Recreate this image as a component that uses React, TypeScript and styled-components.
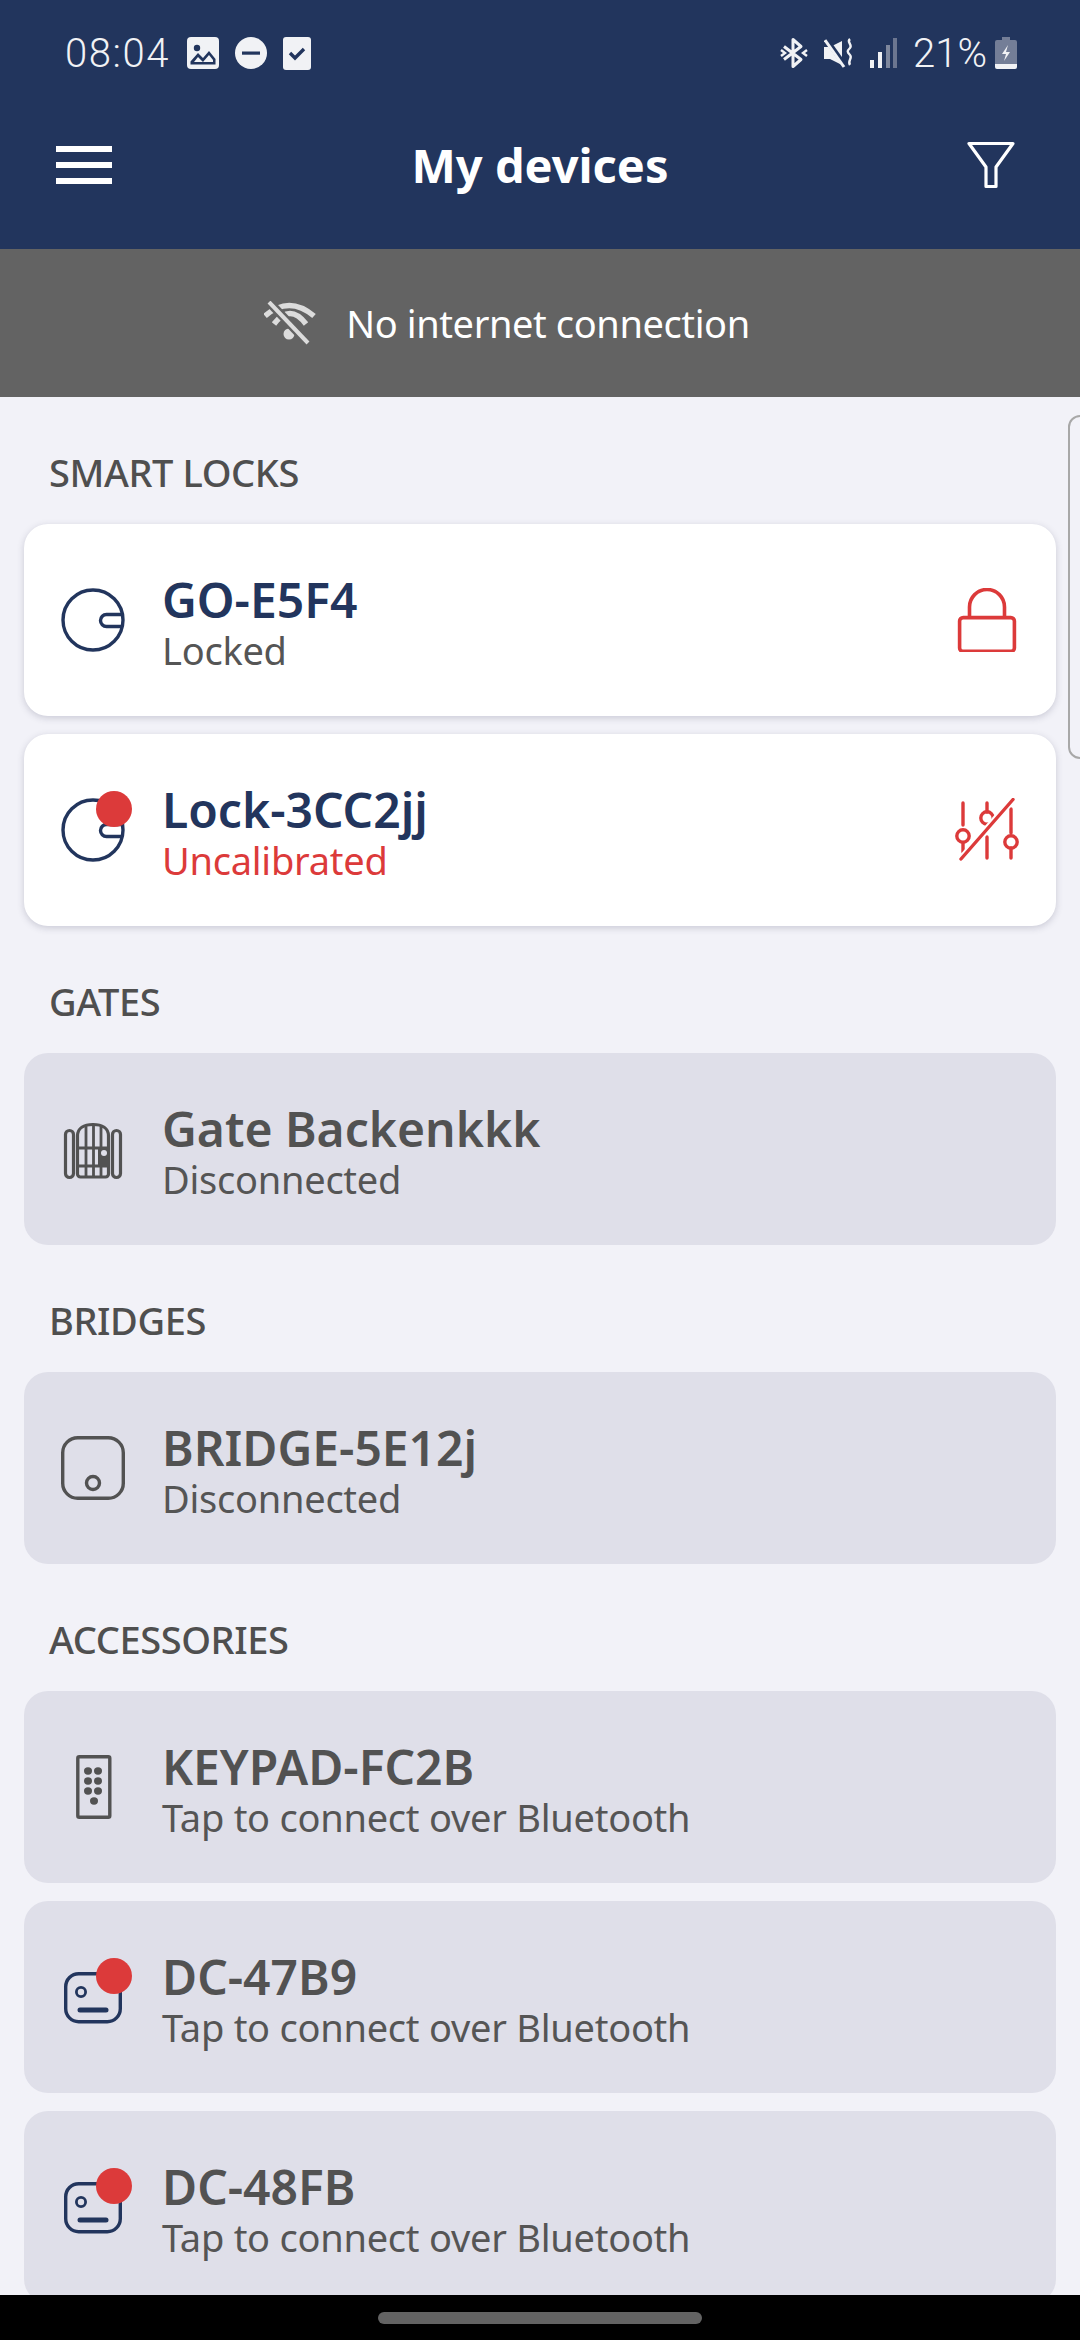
import styled, { createGlobalStyle } from "styled-components";

const GlobalStyle = createGlobalStyle`
  html, body {
    margin: 0;
    padding: 0;
    background: #f2f2f8;
  }
  body {
    font-family: "Noto Sans", "Open Sans", sans-serif;
  }
`;

const NAVY = "#22355d";
const RED = "#dc3a3a";
const GREY = "#525252";

const LockIcon = () => (
  <svg width="64" height="64" viewBox="0 0 64 64" fill="none" stroke={NAVY} strokeWidth="3.4">
    <circle cx="32" cy="32" r="30" />
    <path d="M62 26.5H45.5a6 6 0 0 0 0 12H62" />
  </svg>
);

const PadlockIcon = () => (
  <svg width="64" height="64" viewBox="0 0 64 64" fill="none" stroke={RED} strokeWidth="3.6">
    <rect x="4.6" y="29.6" width="54.8" height="33.8" rx="3.5" />
    <path d="M14.5 29V19a17.5 17.5 0 0 1 35 0v10" />
  </svg>
);

const SlidersIcon = () => (
  <svg width="64" height="64" viewBox="0 0 64 64" fill="none" stroke={RED} strokeWidth="3.4" strokeLinecap="round">
    <path d="M8 5v22M8 45v9M32 5v9M32 39v21M56 11v24M56 50v10" />
    <circle cx="8" cy="38" r="6.2" />
    <circle cx="32" cy="20" r="6.2" />
    <circle cx="56" cy="44" r="6.2" />
    <path d="M58 1L6 61" stroke="#fff" strokeWidth="7" strokeLinecap="butt" />
    <path d="M58 1.500L6 61" />
  </svg>
);

const GateIcon = () => (
  <svg width="64" height="64" viewBox="0 0 64 64" fill="none" stroke={GREY} strokeWidth="3.2">
    <rect x="4.500" y="13.500" width="8" height="47" rx="4" />
    <rect x="51.500" y="13.500" width="8" height="47" rx="4" />
    <path d="M16.500 57V19C16.500 11 23 7.500 32 7.500S47.500 11 47.500 19V57a3 3 0 0 1-3 3H19.500a3 3 0 0 1-3-3Z" />
    <path d="M25 8v52M32.500 7v52M40 8v52M16 31h32M16 49h32" strokeWidth="2.8" />
    <rect x="37" y="31" width="11" height="18" fill={GREY} stroke="none" />
    <circle cx="43" cy="36" r="3" fill="#dfdfe9" stroke="none" />
  </svg>
);

const BridgeIcon = () => (
  <svg width="64" height="64" viewBox="0 0 64 64" fill="none" stroke={GREY} strokeWidth="3.4">
    <rect x="1.700" y="1.700" width="60.600" height="60.600" rx="15" />
    <circle cx="32" cy="47" r="6.500" />
  </svg>
);

const KeypadIcon = () => (
  <svg width="64" height="64" viewBox="0 0 64 64" fill="none">
    <rect x="16.800" y="1.800" width="32" height="60.500" rx="1.500" stroke={GREY} strokeWidth="3.400" />
    <g fill={GREY}>
      <ellipse cx="27" cy="16" rx="4" ry="3.700" />
      <ellipse cx="37" cy="16" rx="4" ry="3.700" />
      <ellipse cx="27" cy="26" rx="4" ry="3.700" />
      <ellipse cx="37" cy="26" rx="4" ry="3.700" />
      <ellipse cx="27" cy="36" rx="4" ry="3.700" />
      <ellipse cx="37" cy="36" rx="4" ry="3.700" />
      <ellipse cx="33" cy="46" rx="4" ry="3.700" />
    </g>
  </svg>
);

const ControllerIcon = () => (
  <svg width="64" height="64" viewBox="0 0 64 64" fill="none" stroke={NAVY} strokeWidth="3.400">
    <rect x="4.700" y="8.700" width="54.600" height="48" rx="13" />
    <circle cx="20" cy="27" r="4.600" strokeWidth="2.800" />
    <path d="M19 45h26" strokeWidth="5" strokeLinecap="round" />
  </svg>
);

const MenuIcon = () => (
  <svg width="56" height="38" viewBox="0 0 56 38" fill="#fff">
    <rect width="56" height="6" />
    <rect y="16" width="56" height="6" />
    <rect y="32" width="56" height="6" />
  </svg>
);

const FilterIcon = () => (
  <svg width="48" height="48" viewBox="0 0 48 48" fill="none" stroke="#fff" strokeWidth="3.200" strokeLinejoin="round">
    <path d="M2 2.500h44L29 26v19.500h-10V26Z" />
  </svg>
);

const WifiOffIcon = () => (
  <svg width="52" height="44" viewBox="0 0 52 44" fill="none" stroke="#dcdcdc" strokeWidth="5.500">
    <path d="M1 15Q25-6 50 15" />
    <path d="M10 23Q26 2 42 23" />
    <circle cx="25" cy="33" r="5.500" fill="#dcdcdc" stroke="none" />
    <path d="M4 0l42 44" stroke="#636363" strokeWidth="9" />
    <path d="M5 1l39 41" strokeWidth="4" />
  </svg>
);

const ImageStatusIcon = () => (
  <svg width="32" height="32" viewBox="0 0 32 32">
    <rect width="32" height="32" rx="4" fill="#f1f2f5" />
    <circle cx="10" cy="11" r="3.200" fill={NAVY} />
    <path d="M3.500 27.500v-3L11 16l5 5 6-7 6.500 8v5.500Z" fill={NAVY} />
    <path d="M7 25l4-5 5 5 6-7 4 5v2H7Z" fill="#f1f2f5" />
  </svg>
);

const DndStatusIcon = () => (
  <svg width="32" height="32" viewBox="0 0 32 32">
    <circle cx="16" cy="16" r="16" fill="#f1f2f5" />
    <rect x="7" y="14.500" width="18" height="3.200" fill={NAVY} />
  </svg>
);

const CheckStatusIcon = () => (
  <svg width="28" height="33" viewBox="0 0 28 33" fill="none">
    <rect width="28" height="33" rx="3" fill="#f1f2f5" />
    <path d="M7 16l5 5 9-9" stroke={NAVY} strokeWidth="3.400" />
  </svg>
);

const BluetoothStatusIcon = () => (
  <svg width="28" height="32" viewBox="0 0 28 32" fill="none" stroke="#f1f2f5" strokeWidth="3">
    <path d="M13 16V2.500l8 7-17 13M13 16v13.500l8-7-17-13" strokeLinejoin="round" />
    <path d="M1 13l4 3-4 3" strokeWidth="2.400" />
    <path d="M27 13l-4 3 4 3" strokeWidth="2.400" />
  </svg>
);

const MuteStatusIcon = () => (
  <svg width="30" height="32" viewBox="0 0 30 32" fill="none">
    <path d="M0 10h6L18 4v24L6 22H0Z" fill="#f1f2f5" />
    <path d="M2 2l20 28" stroke={NAVY} strokeWidth="5" />
    <path d="M1 3l19 27" stroke="#f1f2f5" strokeWidth="3" />
    <path d="M26 2c-4 3 3 6 0 9s-3 4 0 7-3 6 0 10" stroke="#f1f2f5" strokeWidth="2.400" />
  </svg>
);

const SignalStatusIcon = () => (
  <svg width="27" height="30" viewBox="0 0 27 30">
    <rect x="0" y="22" width="4" height="8" fill="#f1f2f5" />
    <rect x="8" y="14" width="4" height="16" fill="#f1f2f5" />
    <rect x="16" y="7" width="4" height="23" fill="#7e879d" />
    <rect x="23" y="0" width="4" height="30" fill="#6c7690" />
  </svg>
);

const BatteryStatusIcon = () => (
  <svg width="22" height="32" viewBox="0 0 22 32">
    <path d="M7 0h8v3h5a2 2 0 0 1 2 2v22H0V5a2 2 0 0 1 2-2h5Z" fill="#747e97" />
    <path d="M0 27h22v3a2 2 0 0 1-2 2H2a2 2 0 0 1-2-2Z" fill="#f1f2f5" />
    <path d="M13 8l-6 9h4l-2 7 6-9h-4Z" fill="#f1f2f5" />
  </svg>
);

const Page = styled.div`
  position: relative;
  width: 1080px;
  height: 2340px;
  display: flex;
  flex-direction: column;
  overflow: hidden;
  background: #f2f2f8;
`;

const Header = styled.header`
  flex: none;
  height: 249px;
  background: ${NAVY};
  color: #fff;
`;

const StatusBar = styled.div`
  height: 106px;
  display: flex;
  align-items: center;
  justify-content: space-between;
  padding: 0 63px 0 65px;
  font-family: Roboto, sans-serif;
  font-size: 40px;
  color: #f1f2f5;
`;

const StatusGroup = styled.div<{ $gap: number }>`
  display: flex;
  align-items: center;
  gap: ${(p) => p.$gap}px;
`;

const StatusTime = styled.span`
  font-weight: 300;
  letter-spacing: 1.6px;
  margin-right: 1px;
`;

const StatusPercent = styled.span`
  font-weight: 300;
  margin: 0 -8px 0 0;
`;

const Toolbar = styled.div`
  height: 118px;
  display: grid;
  grid-template-columns: 1fr auto 1fr;
  align-items: center;
  padding: 0 56px;
`;

const Title = styled.h1`
  margin: 0;
  font-size: 47px;
  font-weight: 700;
`;

const ToolbarEnd = styled.div`
  display: flex;
  justify-content: flex-end;
  padding-right: 9px;
`;

const ToolbarStart = styled.div`
  display: flex;
`;

const Banner = styled.div`
  flex: none;
  height: 148px;
  box-sizing: border-box;
  padding-right: 66px;
  background: #636363;
  color: #fff;
  display: flex;
  align-items: center;
  justify-content: center;
  gap: 30px;
  font-size: 38px;
  letter-spacing: -0.4px;
`;

const List = styled.div`
  flex: 1;
  min-height: 0;
  overflow: hidden;
  padding: 0 24px;
`;

const SectionTitle = styled.h2`
  margin: 0;
  height: 127px;
  box-sizing: border-box;
  padding: 49px 0 0 25px;
  font-size: 38px;
  line-height: 52px;
  font-weight: 500;
  letter-spacing: -0.4px;
  color: #4f4f4f;
`;

const CardStack = styled.div`
  display: flex;
  flex-direction: column;
  gap: 18px;
`;

const Card = styled.div<{ $active?: boolean }>`
  height: 192px;
  flex: none;
  box-sizing: border-box;
  display: flex;
  align-items: center;
  padding: 0 37px;
  border-radius: 24px;
  background: ${(p) => (p.$active ? "#fff" : "#dfdfe9")};
  box-shadow: ${(p) => (p.$active ? "0 2px 7px rgba(60, 60, 90, 0.22)" : "none")};
`;

const IconSlot = styled.div`
  position: relative;
  flex: none;
  width: 64px;
  height: 64px;
  margin-right: 37px;
  svg {
    display: block;
    overflow: visible;
  }
`;

const Badge = styled.span`
  position: absolute;
  left: 35px;
  top: -7px;
  width: 36px;
  height: 36px;
  border-radius: 50%;
  background: ${RED};
`;

const CardText = styled.div`
  flex: 1;
  min-width: 0;
  padding-top: 6px;
`;

const Name = styled.div<{ $active?: boolean }>`
  font-size: 48px;
  line-height: 54px;
  font-weight: 600;
  color: ${(p) => (p.$active ? NAVY : GREY)};
`;

const Detail = styled.div<{ $alert?: boolean }>`
  font-size: 38px;
  line-height: 46px;
  letter-spacing: -0.25px;
  color: ${(p) => (p.$alert ? RED : "#555555")};
`;

const CardAction = styled.div`
  flex: none;
  width: 64px;
  height: 64px;
`;

const EdgeHandle = styled.div`
  position: absolute;
  right: -4px;
  top: 415px;
  width: 12px;
  height: 340px;
  border: 2px solid #a8a8a8;
  border-radius: 12px 0 0 12px;
`;

const NavBar = styled.div`
  flex: none;
  height: 45px;
  background: #000;
  display: flex;
  align-items: center;
  justify-content: center;
`;

const NavPill = styled.div`
  width: 324px;
  height: 12px;
  border-radius: 6px;
  background: #636363;
`;

type Device = {
  name: string;
  detail: string;
  icon: React.ReactNode;
  active?: boolean;
  badge?: boolean;
  alert?: boolean;
  action?: React.ReactNode;
};

const sections: { title: string; devices: Device[] }[] = [
  {
    title: "SMART LOCKS",
    devices: [
      { name: "GO-E5F4", detail: "Locked", icon: <LockIcon />, active: true, action: <PadlockIcon /> },
      {
        name: "Lock-3CC2jj",
        detail: "Uncalibrated",
        icon: <LockIcon />,
        active: true,
        badge: true,
        alert: true,
        action: <SlidersIcon />,
      },
    ],
  },
  { title: "GATES", devices: [{ name: "Gate Backenkkk", detail: "Disconnected", icon: <GateIcon /> }] },
  { title: "BRIDGES", devices: [{ name: "BRIDGE-5E12j", detail: "Disconnected", icon: <BridgeIcon /> }] },
  {
    title: "ACCESSORIES",
    devices: [
      { name: "KEYPAD-FC2B", detail: "Tap to connect over Bluetooth", icon: <KeypadIcon /> },
      { name: "DC-47B9", detail: "Tap to connect over Bluetooth", icon: <ControllerIcon />, badge: true },
      { name: "DC-48FB", detail: "Tap to connect over Bluetooth", icon: <ControllerIcon />, badge: true },
    ],
  },
];

const App = () => {
  return (
    <Page>
      <GlobalStyle />
      <Header>
        <StatusBar>
          <StatusGroup $gap={16}>
            <StatusTime>08:04</StatusTime>
            <ImageStatusIcon />
            <DndStatusIcon />
            <CheckStatusIcon />
          </StatusGroup>
          <StatusGroup $gap={16}>
            <BluetoothStatusIcon />
            <MuteStatusIcon />
            <SignalStatusIcon />
            <StatusPercent>21%</StatusPercent>
            <BatteryStatusIcon />
          </StatusGroup>
        </StatusBar>
        <Toolbar>
          <ToolbarStart>
            <MenuIcon />
          </ToolbarStart>
          <Title>My devices</Title>
          <ToolbarEnd>
            <FilterIcon />
          </ToolbarEnd>
        </Toolbar>
      </Header>
      <Banner>
        <WifiOffIcon />
        <span>No internet connection</span>
      </Banner>
      <List>
        {sections.map((section) => (
          <section key={section.title}>
            <SectionTitle>{section.title}</SectionTitle>
            <CardStack>
              {section.devices.map((device) => (
                <Card key={device.name} $active={device.active}>
                  <IconSlot>
                    {device.icon}
                    {device.badge && <Badge />}
                  </IconSlot>
                  <CardText>
                    <Name $active={device.active}>{device.name}</Name>
                    <Detail $alert={device.alert}>{device.detail}</Detail>
                  </CardText>
                  {device.action && <CardAction>{device.action}</CardAction>}
                </Card>
              ))}
            </CardStack>
          </section>
        ))}
      </List>
      <NavBar>
        <NavPill />
      </NavBar>
      <EdgeHandle />
    </Page>
  );
};

export default App;
